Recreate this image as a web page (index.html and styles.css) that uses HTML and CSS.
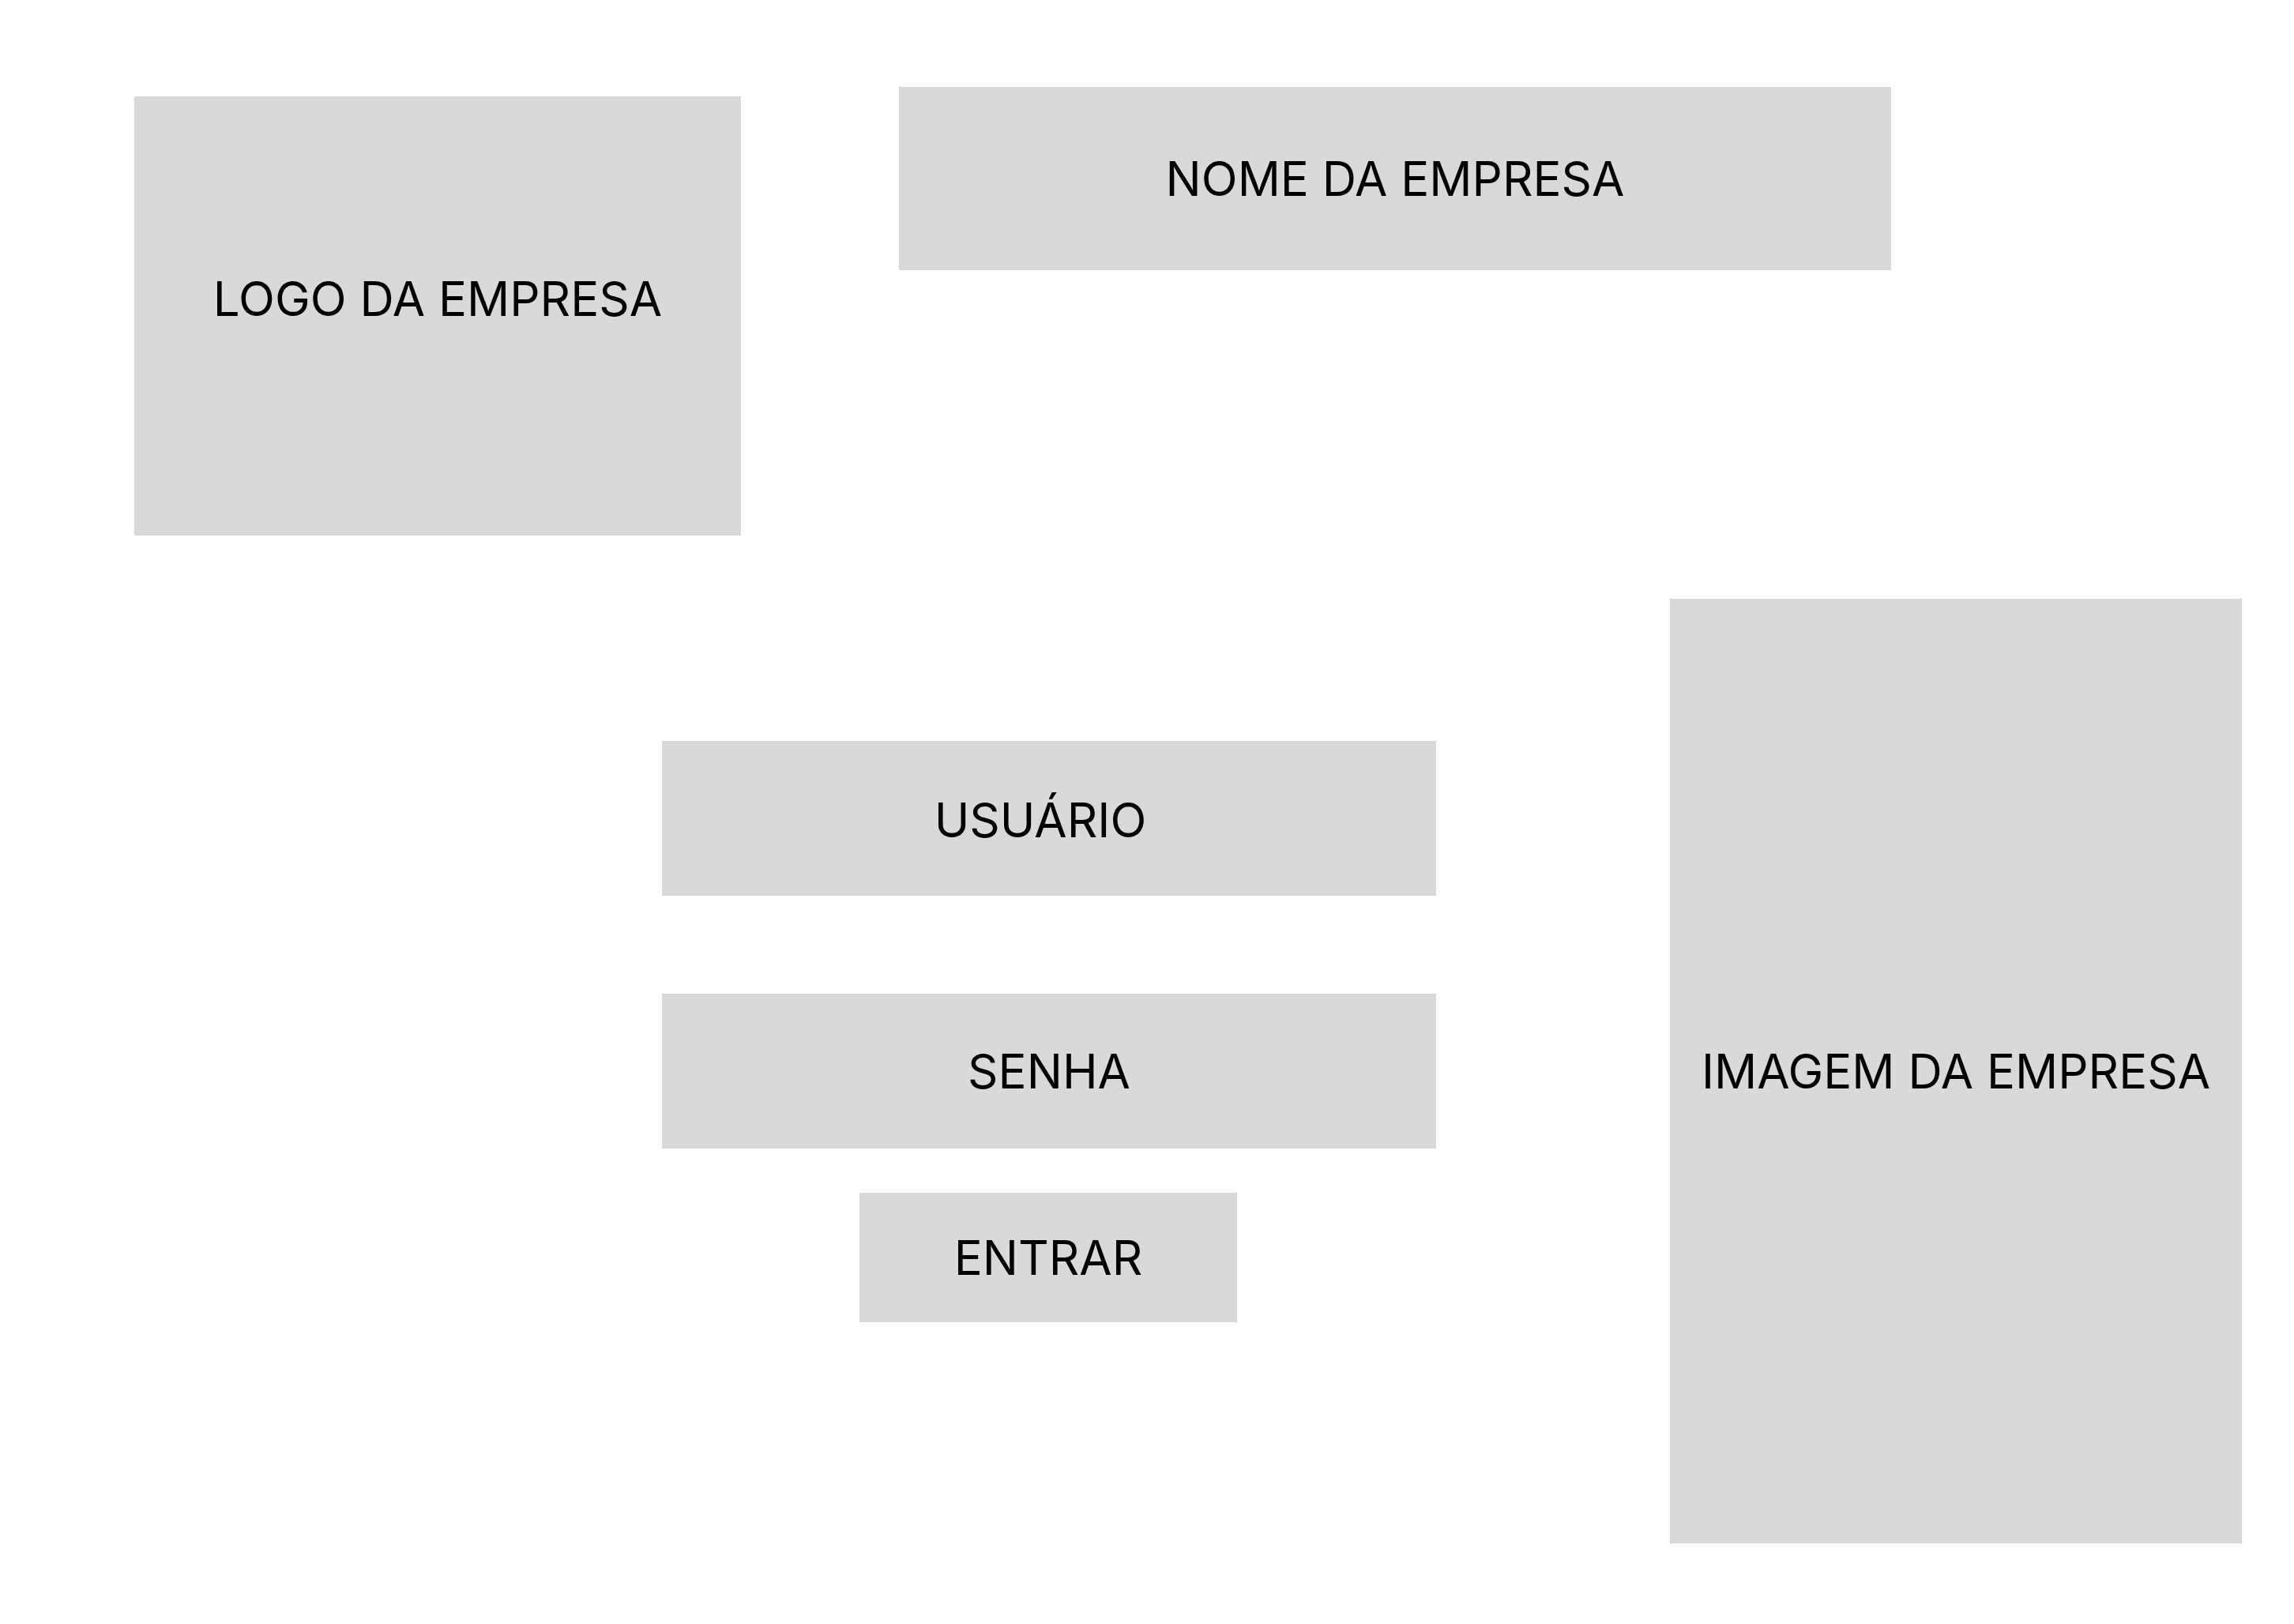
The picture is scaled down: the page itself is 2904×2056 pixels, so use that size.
FILE: index.html
```html
<!DOCTYPE html>
<html lang="pt-BR">
<head>
<meta charset="utf-8">
<title>Login</title>
<link rel="stylesheet" href="styles.css">
</head>
<body>
<div class="canvas">
  <header class="top">
    <div class="box logo">LOGO DA EMPRESA</div>
    <div class="box name">NOME DA EMPRESA</div>
  </header>
  <main class="bottom">
    <form class="form">
      <div class="box field user">USUÁRIO</div>
      <div class="box field pass">SENHA</div>
      <div class="box btn">ENTRAR</div>
    </form>
    <div class="box image">IMAGEM DA EMPRESA</div>
  </main>
</div>
</body>
</html>
```
FILE: styles.css
```css
html, body {
  margin: 0;
  padding: 0;
  background: #ffffff;
}
.canvas {
  width: 2904px;
  height: 2056px;
  padding-top: 110px;
  box-sizing: border-box;
  font-family: "Inter", "Liberation Sans", sans-serif;
  color: #000000;
}
.box {
  background: #d9d9d9;
  display: flex;
  align-items: center;
  justify-content: center;
  font-size: 60px;
  font-weight: 400;
  line-height: 1;
  box-sizing: border-box;
  white-space: nowrap;
}
.top {
  display: flex;
  align-items: flex-start;
}
.logo {
  margin-left: 170px;
  margin-top: 12px;
  width: 768px;
  height: 556px;
  padding-bottom: 44px;
}
.name {
  margin-left: 200px;
  width: 1256px;
  height: 232px;
}
.bottom {
  display: flex;
  align-items: flex-start;
  margin-top: 80px;
  padding-left: 838px;
}
.form {
  margin: 180px 0 0 0;
  width: 980px;
  display: flex;
  flex-direction: column;
}
.field {
  width: 980px;
  height: 196px;
}
.user {
  padding-right: 22px;
  padding-top: 4px;
}
.pass {
  margin-top: 124px;
}
.btn {
  margin-top: 56px;
  margin-left: 250px;
  width: 478px;
  height: 164px;
}
.image {
  margin-left: 296px;
  width: 724px;
  height: 1196px;
}
```
